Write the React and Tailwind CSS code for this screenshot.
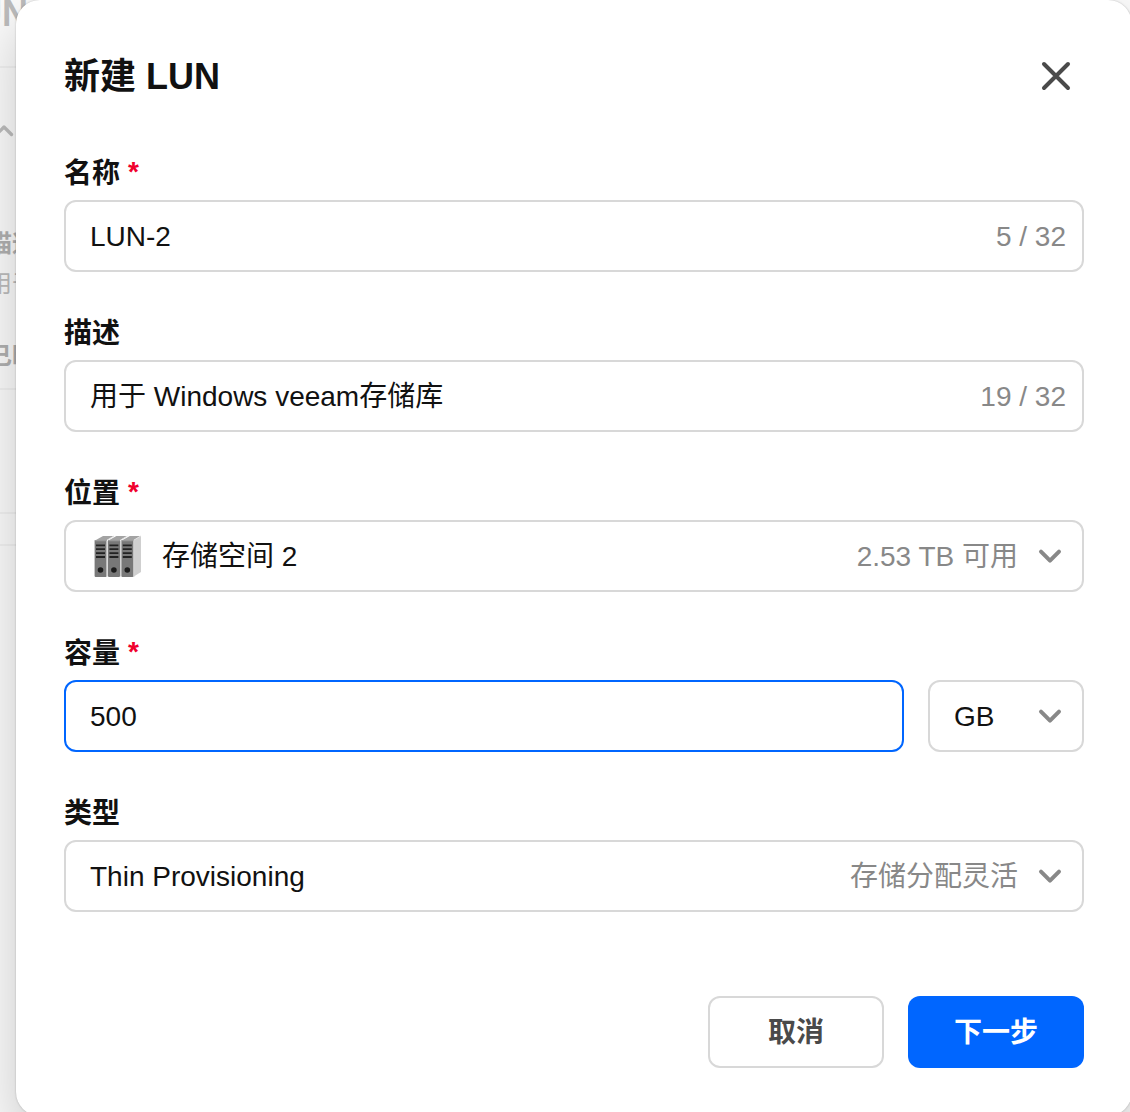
import React, { useState } from 'react'
import { clsx } from 'clsx'

const TEXT_LIMIT = 32

function ChevronIcon({ className }) {
  return (
    <svg
      viewBox="0 0 24 24"
      fill="none"
      stroke="currentColor"
      strokeWidth="4"
      strokeLinecap="round"
      strokeLinejoin="round"
      aria-hidden="true"
      className={clsx('shrink-0 pointer-events-none', className)}
    >
      <path d="M3 6.6l9 9 9-9" />
    </svg>
  )
}

function CloseIcon() {
  return (
    <svg
      viewBox="0 0 32 32"
      fill="none"
      stroke="currentColor"
      strokeWidth="4"
      strokeLinecap="round"
      aria-hidden="true"
      className="h-8 w-8"
    >
      <path d="M4 4l24 24M28 4L4 28" />
    </svg>
  )
}

function StorageIcon() {
  return (
    <svg viewBox="0 1 48 44" aria-hidden="true" className="h-11 w-12 shrink-0">
      <path d="M39 6.5L47 2v36l-8 5z" fill="#cfcfcf" />
      {[0, 13.4, 26.8].map((x) => (
        <g key={x} transform={`translate(${x} 0)`}>
          <path d="M1 6.5L9 2h11l-7.5 4.5z" fill="#a3a3a3" />
          <path d="M12.8 6.3L20 2" stroke="#e2e2e2" strokeWidth="1" />
          <rect x="0.6" y="6" width="12" height="37" rx="1" fill="#787878" />
          <rect x="0.6" y="6" width="12" height="1.2" rx="0.6" fill="#9a9a9a" />
          <rect x="12.6" y="7" width="1.2" height="35.5" fill="#d2d2d2" />
          <path d="M2 11.3h9M2 15.2h9M2 19.1h9M2 23h9" stroke="#222222" strokeWidth="1.8" />
          <circle cx="6.5" cy="36" r="2.8" fill="#1c1c1c" />
        </g>
      ))}
    </svg>
  )
}

function Field({ id, label, required, children }) {
  return (
    <div className="flex flex-col gap-1.5">
      <label htmlFor={id} className="flex items-start gap-2 text-[28px] leading-10 font-bold text-[#111111]">
        {label}
        {required && <span className="leading-9 text-[#f0002d]">*</span>}
      </label>
      {children}
    </div>
  )
}

function FieldBox({ active, className, children }) {
  return (
    <div
      className={clsx(
        'flex h-18 items-center rounded-xl border-2 bg-white pt-0.5 pl-6 text-[28px] leading-10',
        active ? 'border-[#0066ff]' : 'border-[#d8d8d8]',
        className
      )}
    >
      {children}
    </div>
  )
}

function CountedInput({ id, value, onChange }) {
  return (
    <FieldBox className="gap-4 pr-4">
      <input
        id={id}
        type="text"
        value={value}
        maxLength={TEXT_LIMIT}
        onChange={(e) => onChange(e.target.value)}
        className="h-9 min-w-0 flex-1 bg-transparent leading-9 text-[#111111] outline-none"
      />
      <span className="text-[#888888]">
        {value.length} / {TEXT_LIMIT}
      </span>
    </FieldBox>
  )
}

function BackgroundPage() {
  return (
    <div aria-hidden="true" className="absolute inset-0 bg-[#fafafa] text-2xl text-[#bcbcbc]">
      <div className="-ml-11.5 h-17 border-b-2 border-[#f0f0f0] text-4xl leading-7 font-bold">LUN</div>
      <div className="-ml-3 h-80.5 border-b-2 border-[#f0f0f0] pt-13">
        <ChevronIcon className="ml-1.5 h-5 w-5 rotate-180" />
        <p className="mt-21 leading-10 font-bold text-[#b0b0b0]">描述</p>
        <p className="leading-10">用于</p>
        <p className="mt-8 leading-10 font-bold text-[#b0b0b0]">已映射</p>
      </div>
      <div className="h-31 border-b-2 border-[#f0f0f0]" />
      <div className="h-8 border-b-2 border-[#f0f0f0]" />
    </div>
  )
}

function CreateLunDialog() {
  const [name, setName] = useState('LUN-2')
  const [description, setDescription] = useState('用于 Windows veeam存储库')
  const [size, setSize] = useState('500')

  return (
    <div
      role="dialog"
      aria-labelledby="dialog-title"
      className="relative -mr-0.5 ml-4 rounded-3xl bg-white p-12 shadow-[0_0_2px_rgba(0,0,0,0.25),0_24px_56px_rgba(0,0,0,0.2)]"
    >
      <header className="flex items-center justify-between pr-3">
        <h2 id="dialog-title" className="pt-0.5 text-4xl leading-[54px] font-bold text-[#111111]">
          新建 LUN
        </h2>
        <button type="button" aria-label="关闭" className="text-[#4a4a4a]">
          <CloseIcon />
        </button>
      </header>

      <form className="mt-12.5" onSubmit={(e) => e.preventDefault()}>
        <div className="flex flex-col gap-10.5">
          <Field id="name" label="名称" required>
            <CountedInput id="name" value={name} onChange={setName} />
          </Field>

          <Field id="description" label="描述">
            <CountedInput id="description" value={description} onChange={setDescription} />
          </Field>

          <Field id="location" label="位置" required>
            <FieldBox className="pr-5">
              <span className="ml-1 flex items-center">
                <StorageIcon />
              </span>
              <select id="location" className="ml-5 h-full min-w-0 flex-1 appearance-none bg-transparent text-[#111111] outline-none">
                <option>存储空间 2</option>
              </select>
              <span className="mr-5 text-[#888888]">2.53 TB 可用</span>
              <ChevronIcon className="h-6 w-6 text-[#888888]" />
            </FieldBox>
          </Field>

          <Field id="size" label="容量" required>
            <div className="flex gap-6">
              <FieldBox active className="flex-1 pr-6">
                <input
                  id="size"
                  type="text"
                  inputMode="numeric"
                  value={size}
                  onChange={(e) => setSize(e.target.value)}
                  className="h-9 min-w-0 flex-1 bg-transparent leading-9 text-[#111111] outline-none"
                />
              </FieldBox>
              <FieldBox className="w-39 pr-5">
                <select aria-label="单位" className="h-full min-w-0 flex-1 appearance-none bg-transparent text-[#111111] outline-none">
                  <option>GB</option>
                  <option>TB</option>
                </select>
                <ChevronIcon className="h-6 w-6 text-[#888888]" />
              </FieldBox>
            </div>
          </Field>

          <Field id="type" label="类型">
            <FieldBox className="pr-5">
              <select id="type" className="h-full min-w-0 flex-1 appearance-none bg-transparent text-[#111111] outline-none">
                <option>Thin Provisioning</option>
                <option>Thick Provisioning</option>
              </select>
              <span className="mr-5 text-[#888888]">存储分配灵活</span>
              <ChevronIcon className="h-6 w-6 text-[#888888]" />
            </FieldBox>
          </Field>
        </div>

        {/* Actions */}
        <div className="mt-21 flex justify-end gap-6 text-[28px] leading-10 font-bold">
          <button type="button" className="h-18 w-44 rounded-xl border-2 border-[#d8d8d8] bg-white pt-0.5 text-[#4a4a4a]">
            取消
          </button>
          <button type="submit" className="h-18 w-44 rounded-xl bg-[#0066ff] pt-0.5 text-white">
            下一步
          </button>
        </div>
      </form>
    </div>
  )
}

function App() {
  return (
    <div className='relative h-screen overflow-hidden font-["Liberation_Sans","Noto_Sans_CJK_SC",sans-serif]'>
      <BackgroundPage />
      <CreateLunDialog />
    </div>
  )
}

export default App
